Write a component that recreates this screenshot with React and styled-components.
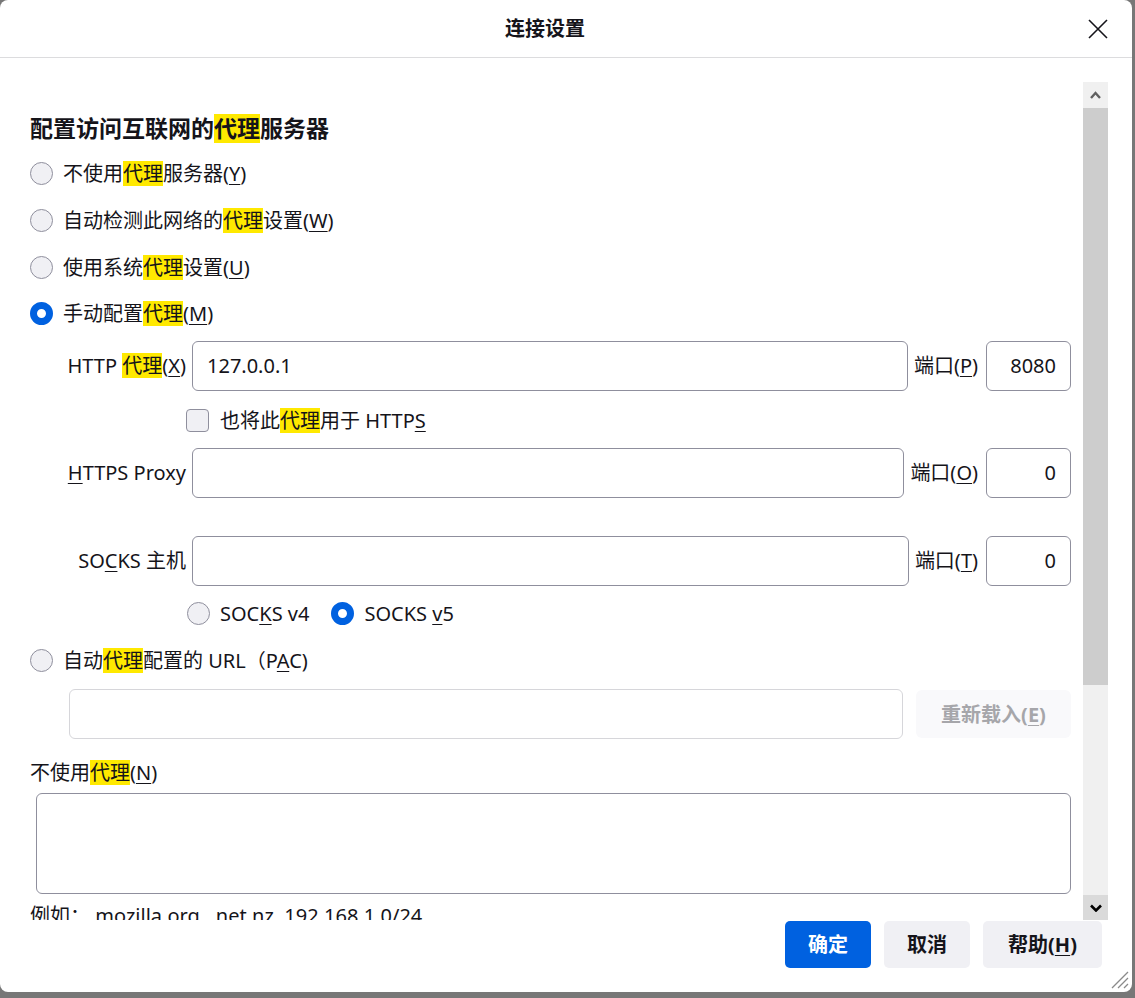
import React from "react";
import styled, { createGlobalStyle, css } from "styled-components";

const GlobalStyle = createGlobalStyle`
  html, body {
    margin: 0;
    padding: 0;
    background: #777777;
  }
  body {
    font-family: "Noto Sans", "Noto Sans CJK SC", sans-serif;
    color: #15141a;
  }
`;

const Dialog = styled.div`
  position: relative;
  width: 1132px;
  height: 992px;
  background: #ffffff;
  border-radius: 8px;
  display: flex;
  flex-direction: column;
  overflow: hidden;
  font-size: 20px;
`;

const Header = styled.header`
  height: 57px;
  flex-shrink: 0;
  border-bottom: 1px solid #dcdcde;
  display: grid;
  grid-template-columns: 505fr auto 524fr;
  align-items: center;
  padding: 0 23px 0 0;
`;

const Title = styled.h1`
  grid-column: 2;
  margin: 0;
  font-size: 20px;
  font-weight: 700;
  line-height: 28px;
`;

const CloseButton = styled.button`
  justify-self: end;
  width: 22px;
  height: 22px;
  padding: 0;
  border: none;
  background: none;
  display: flex;
  align-items: center;
  justify-content: center;
  cursor: pointer;
`;

const Body = styled.div`
  margin-top: 24px;
  height: 838px;
  display: flex;
  flex-shrink: 0;
`;

const Content = styled.div`
  flex: 1;
  overflow: hidden;
  padding: 32px 12px 0 30px;
`;

const Heading = styled.h2`
  margin: 0 0 13px;
  font-size: 23px;
  font-weight: 700;
  line-height: 28px;
`;

const Mark = styled.span`
  display: inline-block;
  background: #ffe900;
  line-height: 1.25em;
`;

const Key = styled.u`
  text-underline-offset: 3px;
  text-decoration-thickness: 1px;
`;

const Option = styled.label`
  display: flex;
  align-items: center;
  height: 36px;
  line-height: 28px;
  margin-top: ${(p) => p.$mt || 0}px;
  margin-bottom: ${(p) => p.$mb ?? 11}px;
  padding-left: ${(p) => p.$indent || 0}px;
`;

const OptionText = styled.span`
  white-space: pre;
  margin-right: ${(p) => p.$mr || 0}px;
`;

const Radio = styled.span`
  box-sizing: border-box;
  width: 23px;
  height: 23px;
  border-radius: 50%;
  flex-shrink: 0;
  margin-right: 10px;
  ${(p) =>
    p.$checked
      ? css`
          background: #ffffff;
          border: 7px solid #0061e0;
        `
      : css`
          background: #f0f0f4;
          border: 1px solid #8f8f9d;
        `}
`;

const Checkbox = styled.span`
  box-sizing: border-box;
  width: 23px;
  height: 23px;
  border-radius: 4px;
  flex-shrink: 0;
  margin-right: 11px;
  background: #f0f0f4;
  border: 1px solid #8f8f9d;
`;

const FieldRow = styled.div`
  display: flex;
  align-items: center;
  height: 50px;
  margin-top: ${(p) => p.$mt || 0}px;
`;

const FieldLabel = styled.label`
  width: 156px;
  flex-shrink: 0;
  text-align: right;
  margin-right: 6px;
  white-space: nowrap;
  line-height: 28px;
`;

const PortLabel = styled.label`
  margin: 0 8px 0 6px;
  white-space: nowrap;
  line-height: 28px;
`;

const TextInput = styled.input`
  box-sizing: border-box;
  height: 50px;
  flex: ${(p) => (p.$port ? "0 0 85px" : "1")};
  min-width: 0;
  border: 1px solid ${(p) => (p.disabled ? "#d6d6da" : "#8f8f9d")};
  border-radius: 6px;
  background: #ffffff;
  font: inherit;
  color: inherit;
  padding: 0 14px;
  text-align: ${(p) => (p.$port ? "right" : "left")};
  outline: none;
`;

const PacRow = styled.div`
  display: flex;
  align-items: center;
  gap: 13px;
  padding-left: 39px;
  margin-bottom: 20px;
`;

const ReloadButton = styled.button`
  box-sizing: border-box;
  width: 155px;
  height: 48px;
  border: none;
  border-radius: 6px;
  background: #f9f9fb;
  color: #a6a6aa;
  font: inherit;
  font-weight: 700;
`;

const PlainLabel = styled.div`
  line-height: 28px;
  margin-bottom: 6px;
`;

const Textarea = styled.textarea`
  display: block;
  box-sizing: border-box;
  margin: 0 0 0 6px;
  width: calc(100% - 6px);
  height: 101px;
  border: 1px solid #8f8f9d;
  border-radius: 6px;
  resize: none;
  font: inherit;
  outline: none;
`;

const Hint = styled.div`
  margin-top: 8px;
  line-height: 28px;
  white-space: nowrap;
`;

const Scrollbar = styled.div`
  width: 25px;
  margin-right: 24px;
  display: flex;
  flex-direction: column;
  background: #f0f0f0;
`;

const ScrollArrow = styled.div`
  height: ${(p) => p.$h}px;
  flex-shrink: 0;
  display: flex;
  align-items: center;
  justify-content: center;
  background: ${(p) => p.$bg};
`;

const Thumb = styled.div`
  height: 577px;
  flex-shrink: 0;
  background: #cdcdcd;
`;

const Track = styled.div`
  flex: 1;
`;

const Footer = styled.footer`
  display: flex;
  justify-content: flex-end;
  gap: 13px;
  padding: 1px 30px 0 0;
`;

const Button = styled.button`
  height: 47px;
  min-width: ${(p) => p.$minWidth || 86}px;
  padding: 0 23px;
  border: none;
  border-radius: 5px;
  font: inherit;
  font-weight: 700;
  line-height: 28px;
  background: ${(p) => (p.$primary ? "#0061e0" : "#f0f0f4")};
  color: ${(p) => (p.$primary ? "#ffffff" : "#15141a")};
`;

const Grip = styled.svg`
  position: absolute;
  right: 3px;
  bottom: 3px;
`;

const Proxy = () => <Mark>代理</Mark>;

const App = () => {
  return (
    <>
      <GlobalStyle />
      <Dialog>
        <Header>
          <Title>连接设置</Title>
          <CloseButton aria-label="关闭">
            <svg width="20" height="20" viewBox="0 0 20 20">
              <path d="M1 1 L19 19 M19 1 L1 19" stroke="#15141a" strokeWidth="1.6" />
            </svg>
          </CloseButton>
        </Header>

        <Body>
          <Content>
            <Heading>
              配置访问互联网的<Proxy />服务器
            </Heading>

            <Option>
              <Radio />
              <OptionText>
                不使用<Proxy />服务器(<Key>Y</Key>)
              </OptionText>
            </Option>
            <Option>
              <Radio />
              <OptionText>
                自动检测此网络的<Proxy />设置(<Key>W</Key>)
              </OptionText>
            </Option>
            <Option $mb={10}>
              <Radio />
              <OptionText>
                使用系统<Proxy />设置(<Key>U</Key>)
              </OptionText>
            </Option>
            <Option $mb={9}>
              <Radio $checked />
              <OptionText>
                手动配置<Proxy />(<Key>M</Key>)
              </OptionText>
            </Option>

            <FieldRow>
              <FieldLabel>
                HTTP <Proxy />(<Key>X</Key>)
              </FieldLabel>
              <TextInput defaultValue="127.0.0.1" />
              <PortLabel>
                端口(<Key>P</Key>)
              </PortLabel>
              <TextInput $port defaultValue="8080" />
            </FieldRow>

            <Option $indent={156} $mt={12} $mb={0}>
              <Checkbox />
              <OptionText>
                也将此<Proxy />用于 HTTP<Key>S</Key>
              </OptionText>
            </Option>

            <FieldRow $mt={9}>
              <FieldLabel>
                <Key>H</Key>TTPS Proxy
              </FieldLabel>
              <TextInput />
              <PortLabel>
                端口(<Key>O</Key>)
              </PortLabel>
              <TextInput $port defaultValue="0" />
            </FieldRow>

            <FieldRow $mt={38}>
              <FieldLabel>
                SO<Key>C</Key>KS 主机
              </FieldLabel>
              <TextInput />
              <PortLabel>
                端口(<Key>T</Key>)
              </PortLabel>
              <TextInput $port defaultValue="0" />
            </FieldRow>

            <Option $indent={157} $mt={10}>
              <Radio />
              <OptionText $mr={22}>
                SOC<Key>K</Key>S v4
              </OptionText>
              <Radio $checked />
              <OptionText>
                SOCKS <Key>v</Key>5
              </OptionText>
            </Option>

            <Option $mb={10}>
              <Radio />
              <OptionText>
                自动<Proxy />配置的 URL（P<Key>A</Key>C)
              </OptionText>
            </Option>

            <PacRow>
              <TextInput disabled />
              <ReloadButton disabled>
                重新载入(<Key>E</Key>)
              </ReloadButton>
            </PacRow>

            <PlainLabel>
              不使用<Proxy />(<Key>N</Key>)
            </PlainLabel>
            <Textarea />
            <Hint>例如：.mozilla.org, .net.nz, 192.168.1.0/24</Hint>
          </Content>

          <Scrollbar>
            <ScrollArrow $h={26} $bg="#f0f0f0">
              <svg width="11" height="8" viewBox="0 0 11 8">
                <path d="M1 7 L5.5 2 L10 7" fill="none" stroke="#606060" strokeWidth="2.4" />
              </svg>
            </ScrollArrow>
            <Thumb />
            <Track />
            <ScrollArrow $h={25} $bg="#dadada">
              <svg width="12" height="8" viewBox="0 0 12 8">
                <path d="M1 1.5 L6 6.5 L11 1.5" fill="none" stroke="#000000" strokeWidth="2.6" />
              </svg>
            </ScrollArrow>
          </Scrollbar>
        </Body>

        <Footer>
          <Button $primary>确定</Button>
          <Button>取消</Button>
          <Button $minWidth={119}>
            帮助(<Key>H</Key>)
          </Button>
        </Footer>

        <Grip width="22" height="22" viewBox="0 0 22 22">
          <path d="M21 5 L5 21 M21 11 L11 21 M21 17 L17 21" stroke="#8a8a8a" strokeWidth="1.3" />
        </Grip>
      </Dialog>
    </>
  );
};

export default App;
